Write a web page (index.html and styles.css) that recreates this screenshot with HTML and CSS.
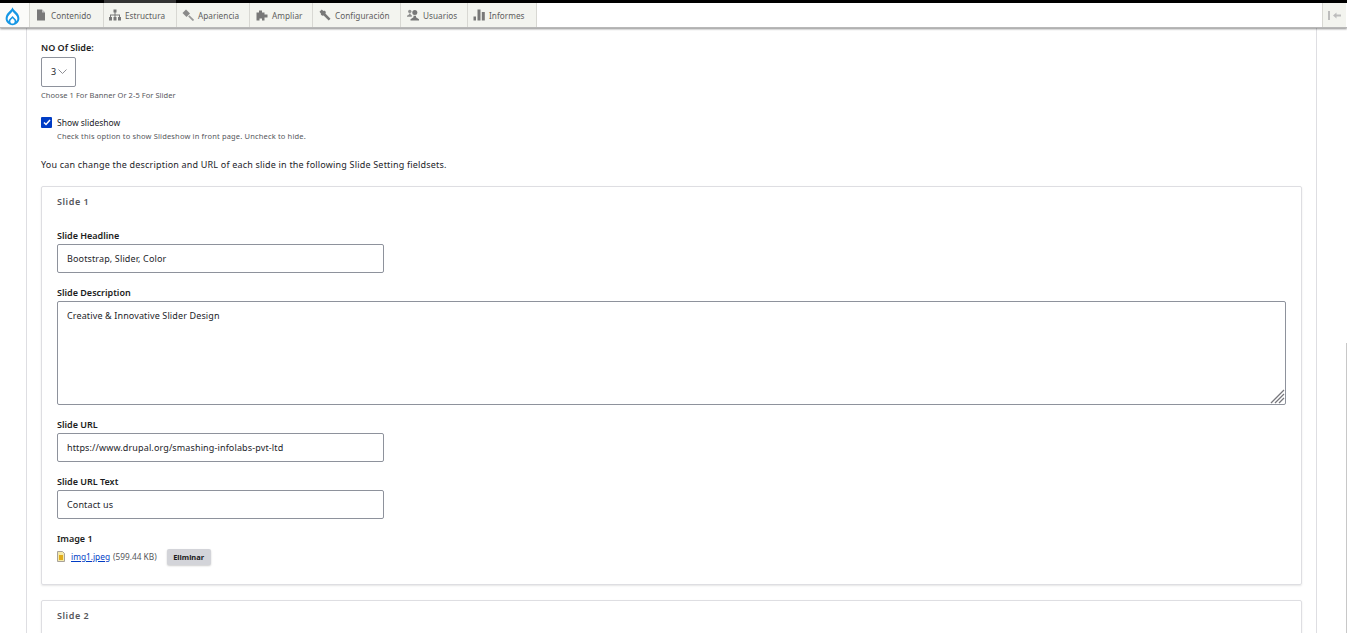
FILE: index.html
```html
<!DOCTYPE html>
<html lang="es">
<head>
<meta charset="utf-8">
<title>Slide settings</title>
<link rel="stylesheet" href="styles.css">
</head>
<body>
<header class="toolbar">
  <div class="topline"><span class="topline-mark"></span></div>
  <nav class="tray">
    <a class="logo" aria-label="Inicio">
      <svg width="15" height="19" viewBox="0 0 15 19"><path d="M7.500 0.300C8.400 2.800 10.500 4.200 12 5.800C14.800 8.900 15.200 12.900 12.700 15.800C10 18.900 5 18.900 2.300 15.800C-0.200 12.900 0.200 8.900 3 5.800C4.500 4.200 6.600 2.800 7.500 0.300Z" fill="#1597e5"/><path d="M7.500 4.200C8.400 5.800 9.700 6.700 10.800 7.900C12.600 9.900 12.900 12.300 11.500 14.200C11.200 12.300 9.500 11 7.500 9C5.500 11 3.800 12.300 3.500 14.200C2.100 12.300 2.400 9.900 4.200 7.900C5.300 6.700 6.600 5.800 7.500 4.200Z" fill="#fff"/><path d="M7.500 11.300C8.500 12.400 9.700 13.200 9.700 14.500C9.700 15.700 8.700 16.600 7.500 16.600C6.300 16.600 5.300 15.700 5.300 14.500C5.300 13.200 6.500 12.400 7.500 11.300Z" fill="#fff"/></svg>
    </a>
    <a class="tab tab-1">
      <svg class="ico" viewBox="0 0 12 12"><path d="M2 0.500H7L10 3.500V11.500H2Z" fill="#787878"/><path d="M7 0.500V3.500H10Z" fill="#c4c4c4"/></svg>Contenido
    </a>
    <a class="tab tab-2">
      <svg class="ico" viewBox="0 0 12 12"><path d="M4.500 0.500H7.500V3.500H6.500V5.500H11V8H12V11.500H9V8H10V6.500H6.500V8H7.500V11.500H4.500V8H5.500V6.500H2V8H3V11.500H0V8H1V5.500H5.500V3.500H4.500Z" fill="#787878"/></svg>Estructura
    </a>
    <a class="tab tab-3">
      <svg class="ico" viewBox="0 0 12 12"><path d="M0.500 4L4 0.500L8 4.500L4.500 8Z" fill="#8a8a8a"/><path d="M6.800 6.800L11.500 11.500" stroke="#9a9a9a" stroke-width="1.800"/></svg>Apariencia
    </a>
    <a class="tab tab-4">
      <svg class="ico" viewBox="0 0 12 12"><path d="M0.500 3.500H3V1.500H6V3.500H8.500V5.500H11.500V8.500H8.500V11.500H6V9.500H3.500V11.500H0.500Z" fill="#787878"/></svg>Ampliar
    </a>
    <a class="tab tab-5">
      <svg class="ico" viewBox="0 0 12 12"><path d="M0.500 2.800L2.800 0.500L4.300 2C5.300 1.200 6.800 1.800 6.800 3.300C6.800 3.900 6.600 4.300 6.400 4.600L11.500 9.700L9.700 11.500L4.600 6.500C3.200 7 1.500 6 1.900 4.400Z" fill="#787878"/></svg>Configuración
    </a>
    <a class="tab tab-6">
      <svg class="ico" viewBox="0 0 12 12"><circle cx="7.800" cy="3.400" r="2.500" fill="#787878"/><path d="M3.500 11.500V10.300L6.500 8.300V6.800H9V8.300L12 10.300V11.500Z" fill="#787878"/><circle cx="2.800" cy="2.400" r="1.700" fill="#8f8f8f"/><path d="M0 7.800V6.800L2 5.500V4.500H3.600V5.500L4.800 6.300V7.800Z" fill="#8f8f8f"/></svg>Usuarios
    </a>
    <a class="tab tab-7">
      <svg class="ico" viewBox="0 0 12 12"><rect x="0.500" y="7.500" width="2.500" height="4" fill="#787878"/><rect x="4.500" y="0.500" width="3" height="11" fill="#787878"/><rect x="8.800" y="3" width="3" height="8.500" fill="#787878"/></svg>Informes
    </a>
    <span class="tray-space"></span>
    <a class="toggle" aria-label="Contraer">
      <svg width="14" height="9" viewBox="0 0 14 9"><rect x="0" y="0" width="2" height="9" fill="#bdbdbd"/><path d="M5 4.500L8.500 1.500V3.500H13V5.500H8.500V7.500Z" fill="#bdbdbd"/></svg>
    </a>
  </nav>
</header>

<main class="page">
  <section class="field select-field">
    <label class="label">NO Of Slide:</label>
    <div class="select"><span>3</span><svg width="9" height="5" viewBox="0 0 9 5"><path d="M0.500 0.500L4.500 4.500L8.500 0.500" fill="none" stroke="#8f8f94"/></svg></div>
    <p class="desc">Choose 1 For Banner Or 2-5 For Slider</p>
  </section>

  <section class="checkrow">
    <span class="check"><svg width="8" height="7" viewBox="0 0 8 7"><path d="M1 3.500L3 5.500L7 1" fill="none" stroke="#fff" stroke-width="1.500"/></svg></span>
    <div>
      <div class="check-label">Show slideshow</div>
      <p class="desc">Check this option to show Slideshow in front page. Uncheck to hide.</p>
    </div>
  </section>

  <p class="intro">You can change the description and URL of each slide in the following Slide Setting fieldsets.</p>

  <section class="card">
    <h2 class="card-title">Slide 1</h2>
    <div class="card-body">
      <div class="item">
        <label class="label">Slide Headline</label>
        <div class="input">Bootstrap, Slider, Color</div>
      </div>
      <div class="item">
        <label class="label">Slide Description</label>
        <div class="textarea">Creative &amp; Innovative Slider Design
          <svg class="grip" width="15" height="15" viewBox="0 0 15 15"><path d="M1 14L14 1M5 14L14 5M9 14L14 9" stroke="#77777c" stroke-width="1.300" fill="none"/></svg>
        </div>
      </div>
      <div class="item">
        <label class="label">Slide URL</label>
        <div class="input">https://www.drupal.org/smashing-infolabs-pvt-ltd</div>
      </div>
      <div class="item">
        <label class="label">Slide URL Text</label>
        <div class="input">Contact us</div>
      </div>
      <div class="item">
        <label class="label">Image 1</label>
        <div class="file">
          <svg width="8" height="11" viewBox="0 0 8 11"><path d="M0.500 0.500H5.500L7.500 2.500V10.500H0.500Z" fill="#f4e9a8" stroke="#a8a29a"/><rect x="2" y="4" width="4" height="5" fill="#e0ac1c"/></svg>
          <a class="file-link">img1.jpeg</a>
          <span class="file-size">(599.44 KB)</span>
          <button class="btn" type="button">Eliminar</button>
        </div>
      </div>
    </div>
  </section>

  <section class="card">
    <h2 class="card-title">Slide 2</h2>
  </section>
</main>
<span class="edge-mark"></span>
</body>
</html>
```
FILE: styles.css
```css
* { box-sizing: border-box; }
html, body { height: 633px; overflow: hidden; }
body {
  margin: 0;
  background: #fff;
  color: #232429;
  font-family: "Noto Sans", "Open Sans", sans-serif;
  font-size: 9px;
  position: relative;
}
.toolbar { box-shadow: 0 1px 2px rgba(0,0,0,.45); position: relative; z-index: 2; }
.topline { height: 3px; background: #000; display: flex; padding-left: 104px; }
.topline-mark { width: 72px; background: #333; }
.tray { height: 25px; display: flex; background: #fff; border-bottom: 1px solid #b8b8b8; }
.logo { width: 29px; padding: 3px 0 0 5px; display: flex; align-items: center; background: #fbfbf9; }
.tab {
  display: flex;
  align-items: center;
  gap: 4px;
  padding-left: 5px;
  background: #f3f4ef;
  border-left: 1px solid #d8d8d3;
  color: #5e5e5e;
  font-size: 8.200px;
  letter-spacing: .05px;
}
.tab-1 { width: 74px; }
.tab-2 { width: 73px; }
.tab-3 { width: 73px; }
.tab-4 { width: 63px; padding-left: 6px; }
.tab-5 { width: 88px; padding-left: 6px; }
.tab-6 { width: 67px; padding-left: 6px; }
.tab-7 { width: 70px; border-right: 1px solid #d8d8d3; }
.ico { flex: none; width: 12px; height: 12px; }
.tray-space { flex: 1; }
.toggle { width: 24px; display: flex; align-items: center; justify-content: center; background: #f3f4ef; border-left: 1px solid #d8d8d3; margin-right: 1px; }

.page {
  margin: 0 30px 0 26px;
  height: 605px;
  padding: 14px 14px 0;
  border-left: 1px solid #dedee2;
  border-right: 1px solid #dedee2;
}
.label { display: block; font-weight: 600; font-size: 9px; line-height: 11px; color: #1b1c21; }
.desc { margin: 0; font-size: 7.500px; line-height: 10px; color: #55565b; }
.select {
  width: 35px;
  height: 30px;
  margin-top: 4px;
  padding: 0 0 1px 9px;
  display: flex;
  align-items: center;
  gap: 2px;
  border: 1px solid #8e929c;
  border-radius: 2px;
  font-size: 9px;
}
.select-field .desc { margin-top: 3px; letter-spacing: .05px; }
.checkrow { display: flex; gap: 5px; margin-top: 17px; }
.check {
  width: 11px; height: 11px;
  display: flex; align-items: center; justify-content: center;
  background: #003cc5; border-radius: 1px; flex: none;
}
.check-label { font-size: 8.500px; line-height: 11px; }
.checkrow .desc { margin-top: 3px; letter-spacing: .16px; }
.intro { margin: 17px 0 0; font-size: 9px; line-height: 14px; letter-spacing: .19px; }
.card {
  margin-top: 14px;
  border: 1px solid #dedee2;
  border-radius: 2px;
  box-shadow: 0 1px 2px rgba(0,0,0,.1);
  padding: 0 15px;
}
.card + .card { margin-top: 15px; height: 60px; }
.card-title { margin: 0; padding-top: 9px; font-size: 9px; line-height: 12px; font-weight: 600; color: #55565b; letter-spacing: .55px; }
.card-body { padding-top: 22px; padding-bottom: 19px; }
.item + .item { margin-top: 14px; }
.item .label { margin-bottom: 3px; }
.input, .textarea {
  border: 1px solid #8e929c;
  border-radius: 2px;
  padding: 0 9px;
  background: #fff;
  font-size: 9px;
  letter-spacing: .13px;
}
.input { width: 327px; height: 29px; line-height: 27px; }
.textarea { position: relative; height: 104px; padding-top: 8px; line-height: 12px; }
.grip { position: absolute; right: 0; bottom: 0; }
.file { display: flex; align-items: center; height: 18px; padding-top: 1px; font-size: 8.300px; }
.file-link { margin-left: 6px; color: #003cc5; text-decoration: underline; }
.file-size { margin-left: 3px; color: #55565b; }
.btn {
  margin-left: 10px;
  width: 44px;
  height: 16px;
  padding: 0;
  border: 0;
  border-radius: 2px;
  background: #d3d4d9;
  color: #1b1c21;
  font: 700 7.500px "Noto Sans", sans-serif;
  box-shadow: 0 1px 2px rgba(0,0,0,.2);
}
.edge-mark { position: absolute; right: 0; top: 343px; width: 1px; height: 290px; background: #c8c8c8; }
```
